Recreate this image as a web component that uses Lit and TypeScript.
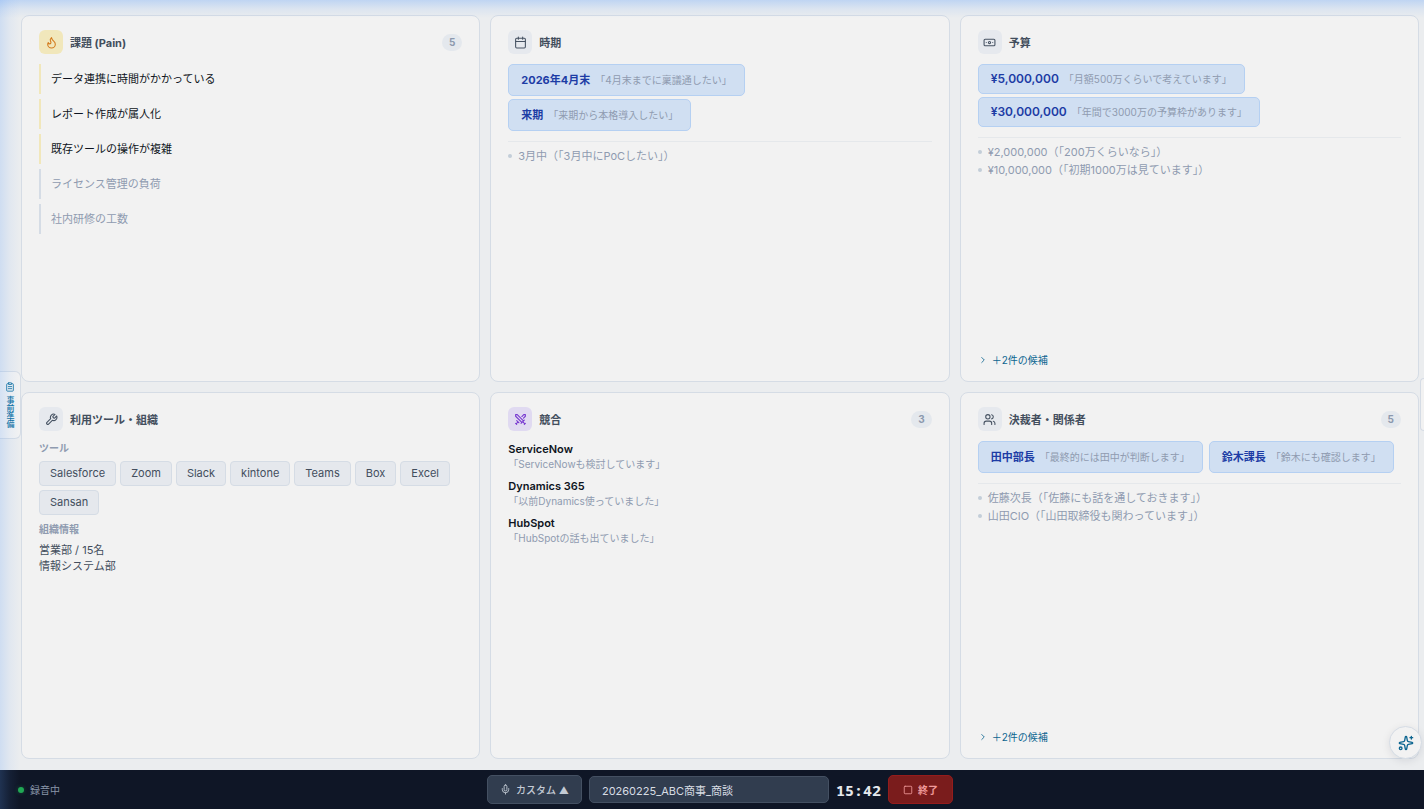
import { LitElement, html, svg, css, nothing, TemplateResult } from "lit";
import { customElement, property } from "lit/decorators.js";
import { classMap } from "lit/directives/class-map.js";

const ICONS: Record<string, TemplateResult> = {
  flame: svg`<path d="M8.5 14.5A2.5 2.5 0 0 0 11 12c0-1.38-.5-2-1-3-1.072-2.143-.224-4.054 2-6 .5 2.5 2 4.9 4 6.5 2 1.6 3 3.5 3 5.5a7 7 0 1 1-14 0c0-1.153.433-2.294 1-3a2.5 2.5 0 0 0 2.5 2.5z"/>`,
  calendar: svg`<path d="M8 2v4M16 2v4M3 10h18"/><rect x="3" y="4" width="18" height="18" rx="2"/>`,
  banknote: svg`<rect x="2" y="6" width="20" height="12" rx="2"/><circle cx="12" cy="12" r="2"/><path d="M6 12h.01M18 12h.01"/>`,
  wrench: svg`<path d="M14.7 6.3a1 1 0 0 0 0 1.4l1.6 1.6a1 1 0 0 0 1.4 0l3.77-3.77a6 6 0 0 1-7.94 7.94l-6.91 6.91a2.12 2.12 0 0 1-3-3l6.91-6.91a6 6 0 0 1 7.94-7.94l-3.76 3.76z"/>`,
  swords: svg`<path d="M14.5 17.5 3 6V3h3l11.5 11.5M13 19l6-6M16 16l4 4M19 21l2-2M14.5 6.5 18 3h3v3l-3.5 3.5M5 14l4 4M7 17l-3 3M3 19l2 2"/>`,
  users: svg`<path d="M16 21v-2a4 4 0 0 0-4-4H6a4 4 0 0 0-4 4v2"/><circle cx="9" cy="7" r="4"/><path d="M22 21v-2a4 4 0 0 0-3-3.87M16 3.13a4 4 0 0 1 0 7.75"/>`,
  chevron: svg`<path d="m9 18 6-6-6-6"/>`,
  clipboard: svg`<rect x="8" y="2" width="8" height="4" rx="1"/><path d="M16 4h2a2 2 0 0 1 2 2v14a2 2 0 0 1-2 2H6a2 2 0 0 1-2-2V6a2 2 0 0 1 2-2h2M8 11h8M8 16h8"/>`,
  mic: svg`<path d="M12 2a3 3 0 0 0-3 3v7a3 3 0 0 0 6 0V5a3 3 0 0 0-3-3ZM19 10v2a7 7 0 0 1-14 0v-2M12 19v3"/>`,
  square: svg`<rect x="3" y="3" width="18" height="18" rx="2"/>`,
  sparkles: svg`<path d="M11.017 2.814a1 1 0 0 1 1.966 0l1.051 5.558a2 2 0 0 0 1.594 1.594l5.558 1.051a1 1 0 0 1 0 1.966l-5.558 1.051a2 2 0 0 0-1.594 1.594l-1.051 5.558a1 1 0 0 1-1.966 0l-1.051-5.558a2 2 0 0 0-1.594-1.594l-5.558-1.051a1 1 0 0 1 0-1.966l5.558-1.051a2 2 0 0 0 1.594-1.594zM20 2v4M22 4h-4"/><circle cx="4" cy="20" r="2"/>`,
};

const icon = (name: string, size = 13) => html`<svg
  width=${size} height=${size} viewBox="0 0 24 24" fill="none" stroke="currentColor"
  stroke-width="2" stroke-linecap="round" stroke-linejoin="round" aria-hidden="true"
>${ICONS[name]}</svg>`;

@customElement("info-card")
class InfoCard extends LitElement {
  @property() heading = "";
  @property() icon = "";
  @property() tone = "";
  @property() count = "";
  @property() more = "";

  static styles = css`
    :host { display: flex; min-width: 0; min-height: 0; }
    .card {
      flex: 1; min-width: 0; display: flex; flex-direction: column;
      box-sizing: border-box; padding: 14px 17px 13px;
      background: #f2f2f2; border: 1px solid #d5dce5; border-radius: 8px;
    }
    .head { display: flex; align-items: center; gap: 7px; margin-bottom: 10px; }
    .badge {
      display: grid; place-items: center; width: 24px; height: 24px;
      border-radius: 6px; background: #e6e9ee; color: #475363;
    }
    .badge.amber { background: #f1e7bb; color: #d37a1c; }
    .badge.violet { background: #e0daf1; color: #7738d0; }
    h2 { flex: 1; margin: 0; padding-top: 2px; font-size: 11px; line-height: 18px; font-weight: 700; color: #434e5d; }
    .count {
      padding: 0 7px; border-radius: 9px; background: #e4e8ed; color: #8c99ad;
      font-size: 10px; line-height: 17px; font-weight: 700;
    }
    .body { flex: 1; min-height: 0; }
    .more {
      align-self: flex-start; display: flex; align-items: center; gap: 4px;
      border: 0; padding: 0; background: none; color: #0c6590;
      font: inherit; font-size: 10px; line-height: 16px;
    }
  `;

  render() {
    return html`<section class="card">
      <header class="head">
        <span class=${classMap({ badge: true, amber: this.tone === "amber", violet: this.tone === "violet" })}>${icon(this.icon)}</span>
        <h2>${this.heading}</h2>
        ${this.count ? html`<span class="count">${this.count}</span>` : nothing}
      </header>
      <div class="body"><slot></slot></div>
      ${this.more ? html`<button class="more" type="button">${icon("chevron", 10)}${this.more}</button>` : nothing}
    </section>`;
  }
}

const PAINS = [
  { text: "データ連携に時間がかかっている", firm: true },
  { text: "レポート作成が属人化", firm: true },
  { text: "既存ツールの操作が複雑", firm: true },
  { text: "ライセンス管理の負荷", firm: false },
  { text: "社内研修の工数", firm: false },
];
const TOOLS = ["Salesforce", "Zoom", "Slack", "kintone", "Teams", "Box", "Excel", "Sansan"];
const RIVALS = [
  ["ServiceNow", "「ServiceNowも検討しています」"],
  ["Dynamics 365", "「以前Dynamics使っていました」"],
  ["HubSpot", "「HubSpotの話も出ていました」"],
];

@customElement("app-root")
class AppRoot extends LitElement {
  static styles = css`
    :host {
      position: relative; display: flex; flex-direction: column;
      height: 100vh; overflow: hidden; background: #ebedef; color: #0e1421;
      font-family: Inter, "Noto Sans CJK JP", sans-serif;
    }
    ul { list-style: none; margin: 0; padding: 0; }
    p { margin: 0; }
    .board {
      flex: 1; min-height: 0; display: grid; gap: 10px;
      grid-template: repeat(2, minmax(0, 1fr)) / repeat(3, minmax(0, 1fr));
      padding: 15px 5px 11px 21px;
    }
    .pains { display: grid; gap: 5px; }
    .pain {
      padding-left: 10px; border-left: 2px solid #d5dce5;
      font-size: 11px; line-height: 30px; color: #8f9bb0;
    }
    .pain.firm { border-color: #f1e7bb; color: #0e1421; }
    .picks { display: flex; flex-wrap: wrap; gap: 3px 6px; }
    .picks.stack { flex-direction: column; align-items: flex-start; }
    .pick {
      display: flex; align-items: center; gap: 5px; padding: 0 12px;
      border: 1px solid #b5d0f2; border-radius: 5px; background: #d0dff2;
      font-size: 11px; line-height: 30px; font-weight: 700; color: #1d3ca5;
    }
    .tight .pick { font-size: 12px; line-height: 28px; font-weight: 600; }
    .pick .quote { font-size: 10px; font-weight: 400; color: #8f9bb0; }
    .maybe { margin-top: 10px; padding-top: 5px; border-top: 1px solid #e5e8eb; }
    .maybe li {
      display: flex; align-items: center; gap: 6px;
      font-size: 11px; line-height: 18px; color: #8f9bb0;
    }
    .maybe li::before {
      content: ""; width: 4px; height: 4px; border-radius: 50%; background: #c3ced9;
    }
    h3 { margin: 0 0 5px; font-size: 10px; line-height: 15px; font-weight: 700; color: #8f9bb0; }
    .tools { display: flex; flex-wrap: wrap; gap: 4px; margin-bottom: 7px; }
    .tool {
      padding: 0 10px; border: 1px solid #d5dce5; border-radius: 4px;
      background: #e5e8ed; color: #434e5d; font-size: 11px; line-height: 23px;
    }
    .org { font-size: 11px; line-height: 16px; color: #434e5d; }
    .rivals { display: grid; gap: 7px; }
    .rival { font-size: 11px; line-height: 16px; font-weight: 600; }
    .said { font-size: 10px; line-height: 14px; color: #8f9bb0; }

    .bar {
      display: grid; grid-template-columns: 1fr auto 1fr; align-items: center;
      height: 39px; padding: 0 2px 0 18px; background: #0f1626;
    }
    .status { display: flex; align-items: center; gap: 6px; font-size: 10px; color: #8995a8; }
    .dot { width: 6px; height: 6px; border-radius: 50%; background: #20a854; box-shadow: 0 0 4px #20a85466; }
    .controls { display: flex; align-items: center; gap: 7px; }
    .mode, .stop {
      display: flex; align-items: center; gap: 5px; box-sizing: border-box; height: 29px;
      border-radius: 5px; font: inherit; font-size: 10px; font-weight: 500;
    }
    .mode { padding: 0 12px; border: 1px solid #445062; background: #313d4f; color: #c3cad4; }
    .stop { padding: 0 14px; border: 1px solid #951c1c; background: #7a1c1c; color: #f09a9a; font-weight: 700; }
    .name {
      box-sizing: border-box; width: 240px; height: 27px; padding: 0 12px;
      border: 1px solid #445062; border-radius: 5px; background: #313d4f;
      color: #d7dce3; font: inherit; font-size: 11px;
    }
    .clock { font: 700 15px/20px "Noto Sans Mono", "DejaVu Sans Mono", monospace; color: #e4e8ed; }

    .tab {
      position: absolute; left: 0; top: 371px; z-index: 2;
      display: flex; flex-direction: column; align-items: center; gap: 4px;
      box-sizing: border-box; width: 21px; padding: 10px 0;
      border: 1px solid #d5dce5; border-left: 0; border-radius: 0 6px 6px 0;
      background: #f2f2f2; color: #0c6f9f; font: inherit; font-size: 8px; font-weight: 500;
    }
    .tab-label { writing-mode: vertical-rl; line-height: 10px; }
    .peek {
      position: absolute; right: 0; top: 378px; box-sizing: border-box; width: 4px; height: 53px;
      border: 1px solid #d5dce5; border-right: 0; border-radius: 6px 0 0 6px; background: #f2f2f2;
    }
    .assist {
      position: absolute; right: 2px; bottom: 50px; display: grid; place-items: center;
      box-sizing: border-box; width: 33px; height: 33px; padding: 0; border-radius: 50%;
      border: 1px solid #d5dce5; background: #f2f2f2; color: #0c6590;
      box-shadow: 0 2px 8px #0f162618;
    }
    .glow {
      position: absolute; inset: 0; z-index: 3; pointer-events: none;
      background:
        linear-gradient(to bottom, #60a0fa50, #60a0fa1c 9px, transparent 18px),
        linear-gradient(to right, #60a0fa34, #60a0fa12 10px, transparent 20px);
    }
  `;

  private pick(name: string, quote: string) {
    return html`<li class="pick">${name}<span class="quote">${quote}</span></li>`;
  }

  render() {
    return html`
      <main class="board">
        <info-card heading="課題 (Pain)" icon="flame" tone="amber" count="5">
          <ul class="pains">
            ${PAINS.map((p) => html`<li class=${classMap({ pain: true, firm: p.firm })}>${p.text}</li>`)}
          </ul>
        </info-card>

        <info-card heading="時期" icon="calendar">
          <ul class="picks stack">
            ${this.pick("2026年4月末", "「4月末までに稟議通したい」")}
            ${this.pick("来期", "「来期から本格導入したい」")}
          </ul>
          <ul class="maybe"><li>3月中（「3月中にPoCしたい」）</li></ul>
        </info-card>

        <info-card heading="予算" icon="banknote" more="＋2件の候補">
          <ul class="picks stack tight">
            ${this.pick("¥5,000,000", "「月額500万くらいで考えています」")}
            ${this.pick("¥30,000,000", "「年間で3000万の予算枠があります」")}
          </ul>
          <ul class="maybe">
            <li>¥2,000,000（「200万くらいなら」）</li>
            <li>¥10,000,000（「初期1000万は見ています」）</li>
          </ul>
        </info-card>

        <info-card heading="利用ツール・組織" icon="wrench">
          <h3>ツール</h3>
          <ul class="tools">${TOOLS.map((t) => html`<li class="tool">${t}</li>`)}</ul>
          <h3>組織情報</h3>
          <p class="org">営業部 / 15名</p>
          <p class="org">情報システム部</p>
        </info-card>

        <info-card heading="競合" icon="swords" tone="violet" count="3">
          <ul class="rivals">
            ${RIVALS.map(([n, q]) => html`<li><p class="rival">${n}</p><p class="said">${q}</p></li>`)}
          </ul>
        </info-card>

        <info-card heading="決裁者・関係者" icon="users" count="5" more="＋2件の候補">
          <ul class="picks">
            ${this.pick("田中部長", "「最終的には田中が判断します」")}
            ${this.pick("鈴木課長", "「鈴木にも確認します」")}
          </ul>
          <ul class="maybe">
            <li>佐藤次長（「佐藤にも話を通しておきます」）</li>
            <li>山田CIO（「山田取締役も関わっています」）</li>
          </ul>
        </info-card>
      </main>

      <footer class="bar">
        <div class="status"><span class="dot"></span>録音中</div>
        <div class="controls">
          <button class="mode" type="button">${icon("mic", 11)}<span>カスタム ▲</span></button>
          <input class="name" type="text" aria-label="商談名" .value=${"20260225_ABC商事_商談"} />
          <time class="clock">15:42</time>
          <button class="stop" type="button">${icon("square", 10)}終了</button>
        </div>
      </footer>

      <button class="tab" type="button">${icon("clipboard", 10)}<span class="tab-label">事前準備</span></button>
      <div class="peek"></div>
      <button class="assist" type="button" aria-label="アシスト">${icon("sparkles", 16)}</button>
      <div class="glow"></div>
    `;
  }
}
